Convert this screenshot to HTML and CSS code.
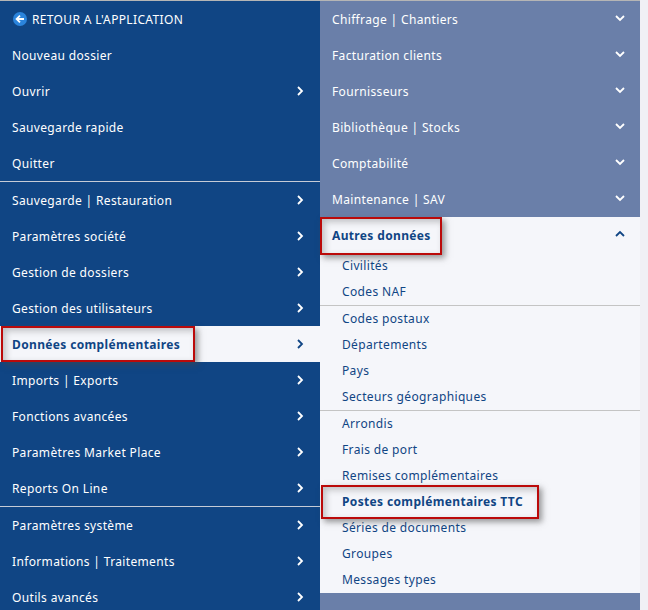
FILE: index.html
```html
<!DOCTYPE html>
<html lang="fr">
<head>
    <meta charset="UTF-8">
    <meta name="viewport" content="width=device-width, initial-scale=1.0">
    <title>Menu</title>
    <link rel="stylesheet" href="styles.css">
</head>

<body>
    <svg class="icon-defs" width="0" height="0">
        <symbol id="chev-right" viewBox="0 0 8 10"><path d="M2 1l4 4-4 4" fill="none" stroke="currentColor" stroke-width="1.8"/></symbol>
        <symbol id="chev-down" viewBox="0 0 10 8"><path d="M1 2l4 4 4-4" fill="none" stroke="currentColor" stroke-width="1.8"/></symbol>
        <symbol id="chev-up" viewBox="0 0 10 8"><path d="M1 6l4-4 4 4" fill="none" stroke="currentColor" stroke-width="1.8"/></symbol>
    </svg>

    <div class="menu">
        <!-- colonne gauche -->
        <div class="col col-left">
            <div class="row row-back">
                <svg class="back-icon" viewBox="0 0 14 14"><circle cx="7" cy="7" r="7" fill="#2b84dc"/><path d="M11 7H4M7 3.6L3.6 7 7 10.4" fill="none" stroke="#fff" stroke-width="1.8"/></svg>
                <span>RETOUR A L'APPLICATION</span>
            </div>
            <div class="row">Nouveau dossier</div>
            <div class="row">Ouvrir<svg class="chev"><use href="#chev-right"/></svg></div>
            <div class="row">Sauvegarde rapide</div>
            <div class="row">Quitter</div>
            <div class="sep"></div>
            <div class="row">Sauvegarde | Restauration<svg class="chev"><use href="#chev-right"/></svg></div>
            <div class="row">Paramètres société<svg class="chev"><use href="#chev-right"/></svg></div>
            <div class="row">Gestion de dossiers<svg class="chev"><use href="#chev-right"/></svg></div>
            <div class="row">Gestion des utilisateurs<svg class="chev"><use href="#chev-right"/></svg></div>
            <div class="row row-active">Données complémentaires<svg class="chev"><use href="#chev-right"/></svg></div>
            <div class="row">Imports | Exports<svg class="chev"><use href="#chev-right"/></svg></div>
            <div class="row">Fonctions avancées<svg class="chev"><use href="#chev-right"/></svg></div>
            <div class="row">Paramètres Market Place<svg class="chev"><use href="#chev-right"/></svg></div>
            <div class="row">Reports On Line<svg class="chev"><use href="#chev-right"/></svg></div>
            <div class="sep"></div>
            <div class="row">Paramètres système<svg class="chev"><use href="#chev-right"/></svg></div>
            <div class="row">Informations | Traitements<svg class="chev"><use href="#chev-right"/></svg></div>
            <div class="row">Outils avancés<svg class="chev"><use href="#chev-right"/></svg></div>
        </div>

        <!-- colonne droite -->
        <div class="col col-right">
            <div class="row">Chiffrage | Chantiers<svg class="chev-v"><use href="#chev-down"/></svg></div>
            <div class="row">Facturation clients<svg class="chev-v"><use href="#chev-down"/></svg></div>
            <div class="row">Fournisseurs<svg class="chev-v"><use href="#chev-down"/></svg></div>
            <div class="row">Bibliothèque | Stocks<svg class="chev-v"><use href="#chev-down"/></svg></div>
            <div class="row">Comptabilité<svg class="chev-v"><use href="#chev-down"/></svg></div>
            <div class="row">Maintenance | SAV<svg class="chev-v"><use href="#chev-down"/></svg></div>
            <div class="panel">
                <div class="row row-open">Autres données<svg class="chev-v"><use href="#chev-up"/></svg></div>
                <div class="sub">Civilités</div>
                <div class="sub">Codes NAF</div>
                <div class="sep sep-light"></div>
                <div class="sub">Codes postaux</div>
                <div class="sub">Départements</div>
                <div class="sub">Pays</div>
                <div class="sub">Secteurs géographiques</div>
                <div class="sep sep-light"></div>
                <div class="sub">Arrondis</div>
                <div class="sub">Frais de port</div>
                <div class="sub">Remises complémentaires</div>
                <div class="sub sub-active">Postes complémentaires TTC</div>
                <div class="sub">Séries de documents</div>
                <div class="sub">Groupes</div>
                <div class="sub">Messages types</div>
            </div>
        </div>
    </div>

    <!-- encadres rouges -->
    <div class="mark mark-left"></div>
    <div class="mark mark-open"></div>
    <div class="mark mark-sub"></div>
</body>

</html>
```

FILE: styles.css
```css
html, body {
    margin: 0;
    padding: 0;
    height: 610px;
    overflow: hidden;
}

body {
    position: relative;
    background-color: #f0f0f5;
    font-family: "Noto Sans", Verdana, sans-serif;
    font-size: 12px;
    letter-spacing: 0.35px;
}

.icon-defs {
    position: absolute;
}

.menu {
    display: flex;
    width: 640px;
    height: 610px;
    border-top: 1px solid #b5b5b5;
    box-sizing: border-box;
}

.col {
    width: 320px;
    flex: none;
    height: 609px;
    overflow: hidden;
}

.col-left {
    background-color: #104584;
    color: #fff;
}

.col-right {
    background-color: #6a7fa9;
    color: #fff;
}

.row {
    height: 36px;
    display: flex;
    align-items: center;
    justify-content: space-between;
    padding: 0 16px 0 12px;
    box-sizing: border-box;
}

.col-right .row {
    padding-right: 15px;
}

.row-back {
    justify-content: flex-start;
    gap: 5px;
    padding-left: 13px;
}

.back-icon {
    width: 14px;
    height: 14px;
}

.row-active {
    background-color: #f5f6fa;
    color: #104584;
    font-weight: bold;
}

.chev {
    width: 8px;
    height: 10px;
}

.chev-v {
    width: 10px;
    height: 8px;
    margin-top: -3px;
}

.sep {
    height: 1px;
    background-color: #c5cbd6;
}

.sep-light {
    background-color: #c4c4c4;
}

.panel {
    background-color: #f5f6fa;
    color: #104584;
    margin-bottom: 17px;
}

.row-open {
    font-weight: bold;
}

.sub {
    height: 26px;
    line-height: 26px;
    padding-left: 22px;
}

.sub-active {
    font-weight: bold;
}

.mark {
    position: absolute;
    box-sizing: border-box;
    border: 2px solid #bb0a0a;
    box-shadow: 3px 3px 6px rgba(70, 70, 70, 0.55), inset 3px 3px 6px rgba(70, 70, 70, 0.3);
}

.mark-left {
    left: 1px;
    top: 326px;
    width: 194px;
    height: 36px;
}

.mark-open {
    left: 320px;
    top: 217px;
    width: 122px;
    height: 38px;
}

.mark-sub {
    left: 321px;
    top: 485px;
    width: 218px;
    height: 34px;
}
```
